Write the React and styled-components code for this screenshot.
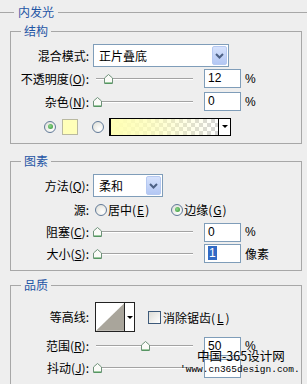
import React from 'react'
import styled, { createGlobalStyle } from 'styled-components'

const GlobalStyle = createGlobalStyle`
  html, body { margin: 0; padding: 0; background: #eeeeee; }
  body {
    font-family: "Noto Sans CJK SC", "Noto Sans", sans-serif;
    font-size: 12px;
    color: #000;
  }
`

const BORDER = '#a7a7a7'
const BLUE = '#1f55a5'

const Page = styled.div`
  position: relative;
  width: 307px;
  height: 384px;
  overflow: hidden;
  box-sizing: border-box;
  padding-top: 4px;
  background: #eeeeee;
`

const SectionTitle = styled.div`
  display: flex;
  align-items: center;
  height: 16px;
  line-height: 16px;
  color: ${BLUE};
  &::before {
    content: '';
    width: 14px;
    margin-right: 4px;
    border-top: 1px solid ${BORDER};
  }
  &::after {
    content: '';
    flex: 1;
    margin-left: 4px;
    border-top: 1px solid ${BORDER};
  }
`

const Group = styled.fieldset`
  margin: ${(p) => p.$top}px 5px 0 10px;
  padding: ${(p) => p.$pad};
  border: 1px solid ${BORDER};
  min-width: 0;
`

const Legend = styled.legend`
  margin-left: 10px;
  padding: 0 3px;
  line-height: 16px;
  font-size: 12px;
  color: ${BLUE};
`

const Row = styled.div`
  display: grid;
  grid-template-columns: 78px auto;
  column-gap: 4px;
  align-items: center;
  height: ${(p) => p.$h}px;
`

const FreeRow = styled.div`
  display: flex;
  align-items: center;
  height: ${(p) => p.$h}px;
  padding-left: ${(p) => p.$pl}px;
`

const Label = styled.span`
  text-align: right;
  white-space: nowrap;
  line-height: 14px;
`

const Controls = styled.div`
  display: flex;
  align-items: center;
  gap: ${(p) => (p.$gap == null ? 3 : p.$gap)}px;
  padding-left: ${(p) => p.$pl || 0}px;
`

const Select = styled.div`
  width: ${(p) => p.$w}px;
  height: 23px;
  box-sizing: border-box;
  border: 1px solid #7f9db9;
  background: #fff;
  display: flex;
  align-items: center;
  justify-content: space-between;
  padding: 0 1px 0 5px;
  line-height: 14px;
`

const SelectButton = styled.span`
  width: 15px;
  height: 19px;
  box-sizing: border-box;
  border: 1px solid #b6c9f1;
  border-radius: 2px;
  background: linear-gradient(#d6e2fc, #b3c7f4);
  display: flex;
  align-items: center;
  justify-content: center;
`

const Slider = styled.div`
  position: relative;
  width: 108px;
  height: 12px;
  box-sizing: border-box;
  padding: 0 8px 0 3px;
  display: flex;
  align-items: center;
`

const Track = styled.div`
  flex: 1;
  height: 0;
  border-top: 1px solid #a3a3a3;
  border-bottom: 1px solid #fff;
`

const Thumb = styled.svg`
  position: absolute;
  top: 1px;
`

const NumBox = styled.div`
  width: 37px;
  height: 19px;
  box-sizing: border-box;
  border: 1px solid #7f9db9;
  background: #fff;
  padding-left: 3px;
  line-height: 17px;
  font-family: "Liberation Sans", "Noto Sans", sans-serif;
  font-size: 12px;
`

const Selected = styled.span`
  background: #316ac5;
  color: #fff;
  padding: 0 1px;
`

const Unit = styled.span`
  margin-left: 1px;
  font-family: "Liberation Sans", "Noto Sans CJK SC", sans-serif;
`

const Radio = styled.span`
  flex: none;
  width: 12px;
  height: 12px;
  box-sizing: border-box;
  border-radius: 50%;
  border: 1px solid #617a99;
  background: radial-gradient(circle at 65% 70%, #ffffff, #dcdcd4);
  display: flex;
  align-items: center;
  justify-content: center;
  &::after {
    content: '';
    display: ${(p) => (p.$on ? 'block' : 'none')};
    width: 5px;
    height: 5px;
    border-radius: 50%;
    background: radial-gradient(circle at 40% 40%, #8fd88f, #2f8f2f);
  }
`

const RadioOption = styled.span`
  display: flex;
  align-items: center;
  gap: 1px;
  white-space: nowrap;
`

const Swatch = styled.span`
  width: 16px;
  height: 16px;
  box-sizing: border-box;
  border: 1px solid #b9b9a0;
  background: #ffffb9;
`

const GradientPicker = styled.div`
  display: flex;
  width: 122px;
  height: 18px;
  box-sizing: border-box;
  border: 1px solid #000;
  border-left-width: 2px;
  background: #fff;
`

const GradientFill = styled.div`
  flex: 1;
  border-right: 1px solid #000;
  background:
    linear-gradient(to right, #ffffb4 0%, rgba(255, 255, 180, 0.75) 35%, rgba(255, 255, 180, 0) 100%),
    repeating-conic-gradient(#d6d6d6 0 25%, #ffffff 0 50%) 0 0 / 8px 8px;
`

const ArrowCell = styled.div`
  width: ${(p) => p.$w}px;
  display: flex;
  align-items: center;
  justify-content: center;
  background: #fff;
  &::after {
    content: '';
    border-left: 3px solid transparent;
    border-right: 3px solid transparent;
    border-top: 3px solid #000;
  }
`

const Contour = styled.div`
  display: flex;
  width: 40px;
  height: 30px;
  box-sizing: border-box;
  border: 1px solid #222;
  background: #fff;
`

const ContourPreview = styled.svg`
  display: block;
  border-right: 1px solid #222;
`

const Checkbox = styled.span`
  width: 13px;
  height: 13px;
  box-sizing: border-box;
  border: 1px solid #3d5a7a;
  background: linear-gradient(135deg, #dcdcd6, #ffffff);
`

const Watermark = styled.div`
  position: absolute;
  left: 180px;
  top: 348px;
  pointer-events: none;
  color: #000;
`

const WatermarkCn = styled.div`
  margin-left: 17px;
  font-size: 12.5px;
  line-height: 16px;
`

const WatermarkUrl = styled.div`
  font-family: "Liberation Mono", monospace;
  font-size: 9.5px;
  line-height: 12px;
`

const Chevron = () => (
  <svg width="9" height="6" viewBox="0 0 9 6">
    <polyline points="1,1 4.5,4.5 8,1" fill="none" stroke="#4d6185" strokeWidth="2" />
  </svg>
)

const SliderControl = ({ value }) => (
  <Slider>
    <Track />
    <Thumb width="9" height="10" viewBox="0 0 9 10" style={{ left: `${value * 0.95}px` }}>
      <polygon points="0.5,4 4.5,0.5 8.5,4 8.5,9.5 0.5,9.5" fill="#fbfbf8" stroke="#6f927a" />
      <line x1="1" y1="9" x2="8" y2="9" stroke="#3f9a4a" />
    </Thumb>
  </Slider>
)

const App = () => {
  return (
    <Page>
      <GlobalStyle />
      <SectionTitle>内发光</SectionTitle>

      {/* 结构 */}
      <Group $top={3} $pad="5px 0 3px 0">
        <Legend>结构</Legend>
        <Row $h={23}>
          <Label>混合模式:</Label>
          <Controls>
            <Select $w={136}>
              <span>正片叠底</span>
              <SelectButton><Chevron /></SelectButton>
            </Select>
          </Controls>
        </Row>
        <Row $h={23}>
          <Label>不透明度(<u>O</u>):</Label>
          <Controls>
            <SliderControl value={12} />
            <NumBox>12</NumBox>
            <Unit>%</Unit>
          </Controls>
        </Row>
        <Row $h={23}>
          <Label>杂色(<u>N</u>):</Label>
          <Controls>
            <SliderControl value={0} />
            <NumBox>0</NumBox>
            <Unit>%</Unit>
          </Controls>
        </Row>
        <FreeRow $h={27} $pl={33}>
          <Radio $on />
          <Swatch style={{ marginLeft: 6 }} />
          <Radio style={{ marginLeft: 14 }} />
          <GradientPicker style={{ marginLeft: 5 }}>
            <GradientFill />
            <ArrowCell $w={11} />
          </GradientPicker>
        </FreeRow>
      </Group>

      {/* 图素 */}
      <Group $top={9} $pad="5px 0 5px 0">
        <Legend>图素</Legend>
        <Row $h={23}>
          <Label>方法(<u>Q</u>):</Label>
          <Controls>
            <Select $w={70}>
              <span>柔和</span>
              <SelectButton><Chevron /></SelectButton>
            </Select>
          </Controls>
        </Row>
        <Row $h={25}>
          <Label>源:</Label>
          <Controls $gap={22} $pl={2}>
            <RadioOption><Radio />居中(<u>E</u>)</RadioOption>
            <RadioOption><Radio $on />边缘(<u>G</u>)</RadioOption>
          </Controls>
        </Row>
        <Row $h={20}>
          <Label>阻塞(<u>C</u>):</Label>
          <Controls>
            <SliderControl value={0} />
            <NumBox>0</NumBox>
            <Unit>%</Unit>
          </Controls>
        </Row>
        <Row $h={23}>
          <Label>大小(<u>S</u>):</Label>
          <Controls>
            <SliderControl value={0} />
            <NumBox><Selected>1</Selected></NumBox>
            <Unit>像素</Unit>
          </Controls>
        </Row>
      </Group>

      {/* 品质 */}
      <Group $top={6} $pad="7px 0 20px 0">
        <Legend>品质</Legend>
        <Row $h={34}>
          <Label>等高线:</Label>
          <Controls $gap={13} $pl={2}>
            <Contour>
              <ContourPreview width="29" height="28" viewBox="0 0 29 28">
                <polygon points="0,28 29,0 29,28" fill="#a9a59b" />
              </ContourPreview>
              <ArrowCell $w={9} />
            </Contour>
            <RadioOption style={{ gap: 2 }}>
              <Checkbox />消除锯齿(<u>L</u>)
            </RadioOption>
          </Controls>
        </Row>
        <Row $h={24}>
          <Label>范围(<u>R</u>):</Label>
          <Controls>
            <SliderControl value={50} />
            <NumBox>50</NumBox>
            <Unit>%</Unit>
          </Controls>
        </Row>
        <Row $h={20}>
          <Label>抖动(<u>J</u>):</Label>
          <Controls>
            <SliderControl value={0} />
            <NumBox />
          </Controls>
        </Row>
      </Group>

      <Watermark>
        <WatermarkCn>中国-365设计网</WatermarkCn>
        <WatermarkUrl>'www.cn365design.com.</WatermarkUrl>
      </Watermark>
    </Page>
  )
}

export default App
